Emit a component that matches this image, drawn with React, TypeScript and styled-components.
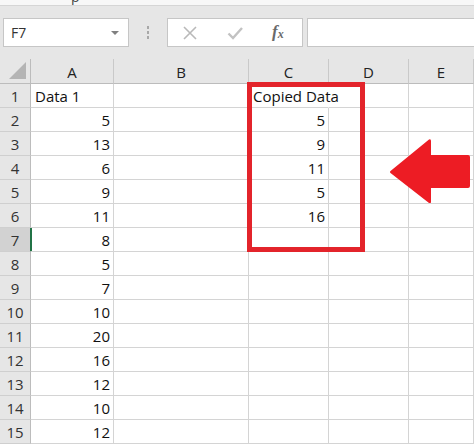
import styled, { createGlobalStyle } from 'styled-components';

const GlobalStyle = createGlobalStyle`
  html, body {
    margin: 0;
    padding: 0;
    background: #ffffff;
    overflow: hidden;
  }
  body {
    font-family: "Open Sans", "Liberation Sans", sans-serif;
  }
`;

const colA = ['Data 1', 5, 13, 6, 9, 11, 8, 5, 7, 10, 20, 16, 12, 10, 12];
const colC = ['Copied Data', 5, 9, 11, 5, 16];
const columns = ['A', 'B', 'C', 'D', 'E'];
const selectedRow = 7;

const App = () => {
  return (
    <Window>
      <GlobalStyle />
      <RibbonEdge>
        <RibbonText>p</RibbonText>
      </RibbonEdge>

      <FormulaBar>
        <NameBox>
          <span>F7</span>
          <DropArrow />
        </NameBox>
        <Grip>
          <i />
          <i />
          <i />
        </Grip>
        <ButtonsBox>
          <BarIcon viewBox='0 0 16 16'>
            <path d='M2 2 L14 14 M14 2 L2 14' stroke='#b9b9b9' strokeWidth='1.6' fill='none' />
          </BarIcon>
          <BarIcon viewBox='0 0 16 16'>
            <path d='M1.5 8.5 L6 13 L15 3' stroke='#c2c2c2' strokeWidth='2.4' fill='none' />
          </BarIcon>
          <Fx>
            f<sub>x</sub>
          </Fx>
        </ButtonsBox>
        <FormulaInput />
      </FormulaBar>

      <SheetArea>
        <Sheet>
          <Corner>
            <svg width='18' height='18' viewBox='0 0 18 18'>
              <polygon points='17,0 17,17 0,17' fill='#b4b4b4' />
            </svg>
          </Corner>
          {columns.map((c) => (
            <ColHead key={c}>{c}</ColHead>
          ))}

          {colA.map((a, i) => {
            const row = i + 1;
            const c = colC[i];
            return [
              <RowHead key={`h${row}`} $selected={row === selectedRow}>
                {row}
              </RowHead>,
              <Cell key={`a${row}`} $right={typeof a === 'number'}>
                {a}
              </Cell>,
              <Cell key={`b${row}`} />,
              <Cell key={`c${row}`} $right={typeof c === 'number'} $open={typeof c === 'string'}>
                {c}
              </Cell>,
              <Cell key={`d${row}`} />,
              <Cell key={`e${row}`} />,
            ];
          })}
        </Sheet>

        <Highlight />
        <Arrow viewBox='0 0 82 66' width='82' height='66'>
          <path
            d='M1.5 34 Q0.5 35 1.5 36 L40 66 Q42 67 42 64.5 L42 51 L79 51 Q81 51 81 49 L81 20 Q81 18 79 18 L42 18 L42 4 Q42 1.5 40 2.5 Z'
            fill='#ed1c24'
          />
        </Arrow>
      </SheetArea>
    </Window>
  );
};

export default App;

const Window = styled.div`
  width: 474px;
  height: 444px;
  overflow: hidden;
  background: #e6e6e6;
  display: flex;
  flex-direction: column;
`;

const RibbonEdge = styled.div`
  height: 5px;
  background: #f7f7f7;
  border-bottom: 1px solid #d5d5d5;
  overflow: hidden;
  position: relative;
`;

const RibbonText = styled.span`
  position: absolute;
  left: 71px;
  top: -13px;
  font-family: "Open Sans", sans-serif;
  font-size: 14px;
  color: #444;
`;

const FormulaBar = styled.div`
  height: 53px;
  display: flex;
  align-items: flex-start;
  padding-top: 12px;
  padding-left: 3px;
  box-sizing: border-box;
  background: #e6e6e6;
`;

const NameBox = styled.div`
  width: 126px;
  height: 29px;
  box-sizing: border-box;
  background: #fff;
  border: 1px solid #c6c6c6;
  display: flex;
  align-items: center;
  justify-content: space-between;
  padding: 0 9px 0 7px;
  font-family: "Open Sans", sans-serif;
  font-size: 14px;
  color: #333;
`;

const DropArrow = styled.span`
  width: 0;
  height: 0;
  border-left: 4px solid transparent;
  border-right: 4px solid transparent;
  border-top: 4px solid #808080;
`;

const Grip = styled.div`
  width: 38px;
  height: 29px;
  display: flex;
  flex-direction: column;
  align-items: center;
  justify-content: center;
  gap: 2px;
  i {
    display: block;
    width: 2px;
    height: 3px;
    background: #a8a8a8;
  }
`;

const ButtonsBox = styled.div`
  width: 136px;
  height: 29px;
  box-sizing: border-box;
  background: #fff;
  border: 1px solid #c6c6c6;
  display: flex;
  align-items: center;
  padding-left: 14px;
  gap: 29px;
`;

const BarIcon = styled.svg`
  width: 16px;
  height: 16px;
`;

const Fx = styled.span`
  font-family: "Liberation Serif", "DejaVu Serif", serif;
  font-style: italic;
  font-weight: bold;
  font-size: 17px;
  color: #6a6a6a;
  margin-top: -2px;
  sub {
    font-size: 12px;
    vertical-align: -1px;
  }
`;

const FormulaInput = styled.div`
  flex: 1;
  height: 29px;
  margin-left: 4px;
  box-sizing: border-box;
  background: #fff;
  border: 1px solid #c6c6c6;
  border-right: none;
`;

const SheetArea = styled.div`
  position: relative;
  flex: 1;
  background: #fff;
`;

const Sheet = styled.div`
  display: grid;
  grid-template-columns: 31px 83px 135px 80px 80px 1fr;
  grid-template-rows: 25px;
  grid-auto-rows: 24px;
  background: #fff;
  font-family: "Open Sans", "Liberation Sans", sans-serif;
`;

const Corner = styled.div`
  background: #e6e6e6;
  border-right: 1px solid #bcbcbc;
  border-bottom: 1px solid #bcbcbc;
  display: flex;
  align-items: flex-end;
  justify-content: flex-end;
  padding: 0 3px 3px 0;
`;

const ColHead = styled.div`
  background: #e6e6e6;
  border-right: 1px solid #c9c9c9;
  border-bottom: 1px solid #bcbcbc;
  display: flex;
  align-items: flex-end;
  justify-content: center;
  font-size: 15px;
  line-height: 20px;
  padding-bottom: 1px;
  color: #222;
`;

const RowHead = styled.div<{ $selected?: boolean }>`
  background: ${({ $selected }) => ($selected ? '#d2d2d2' : '#e6e6e6')};
  border-right: ${({ $selected }) => ($selected ? '2px solid #217346' : '1px solid #bcbcbc')};
  margin-right: ${({ $selected }) => ($selected ? '-1px' : '0')};
  border-bottom: 1px solid #cfcfcf;
  display: flex;
  align-items: flex-end;
  justify-content: center;
  font-size: 15px;
  line-height: 20px;
  padding-bottom: 1px;
  color: #333;
`;

const Cell = styled.div<{ $right?: boolean; $open?: boolean }>`
  border-right: 1px solid ${({ $open }) => ($open ? 'transparent' : '#d4d4d4')};
  border-bottom: 1px solid #d4d4d4;
  display: flex;
  align-items: flex-end;
  justify-content: ${({ $right }) => ($right ? 'flex-end' : 'flex-start')};
  padding: 0 3px 1px 4px;
  font-size: 15px;
  line-height: 20px;
  color: #111;
  white-space: nowrap;
  overflow: visible;
  position: ${({ $open }) => ($open ? 'relative' : 'static')};
  z-index: ${({ $open }) => ($open ? 1 : 'auto')};
`;

const Highlight = styled.div`
  position: absolute;
  left: 247px;
  top: 23px;
  width: 118px;
  height: 170px;
  box-sizing: border-box;
  border: 5px solid #e3242b;
  pointer-events: none;
  z-index: 2;
`;

const Arrow = styled.svg`
  position: absolute;
  left: 389px;
  top: 78px;
  z-index: 2;
`;
